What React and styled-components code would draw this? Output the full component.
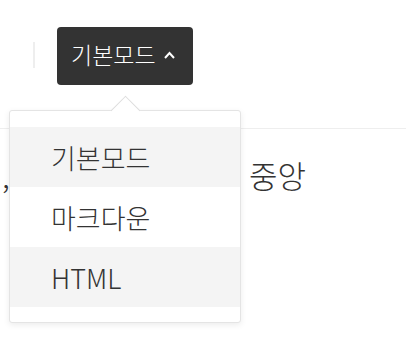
import styled, { createGlobalStyle } from "styled-components";

const GlobalStyle = createGlobalStyle`
  html, body {
    margin: 0;
    padding: 0;
    background: #fff;
  }
  body {
    font-family: "Noto Sans CJK KR", "Noto Sans", sans-serif;
    color: #333;
  }
`;

const Page = styled.div`
  width: 406px;
  height: 338px;
  overflow: hidden;
  position: relative;
`;

const Toolbar = styled.div`
  height: 129px;
  border-bottom: 1px solid #eeeeee;
  display: flex;
  align-items: flex-start;
  box-sizing: border-box;
  padding-left: 33px;
`;

const Divider = styled.div`
  width: 2px;
  height: 26px;
  background: #eeeeee;
  margin-top: 42px;
  margin-right: 22px;
`;

const ModeWrap = styled.div`
  position: relative;
  margin-top: 27px;
`;

const ModeButton = styled.button`
  display: flex;
  align-items: center;
  gap: 8px;
  height: 58px;
  width: 136px;
  padding: 0 0 4px 14px;
  box-sizing: border-box;
  border: none;
  border-radius: 4px;
  background: #333333;
  color: #fff;
  font-family: "Noto Sans CJK KR", sans-serif;
  font-size: 23px;
  font-weight: 300;
  cursor: pointer;

  svg {
    margin-top: 2px;
  }
`;

const Menu = styled.ul`
  position: absolute;
  left: -48px;
  top: 83px;
  width: 232px;
  margin: 0;
  padding: 16px 0 15px;
  list-style: none;
  background: #fff;
  border: 1px solid #e4e4e4;
  border-radius: 3px;
  box-shadow: 0 2px 6px rgba(0, 0, 0, 0.08);
  box-sizing: border-box;
  z-index: 2;

  &::before {
    content: "";
    position: absolute;
    top: -11px;
    left: 105px;
    width: 20px;
    height: 20px;
    background: #fff;
    border-top: 1px solid #dddddd;
    border-left: 1px solid #dddddd;
    transform: rotate(45deg);
  }
`;

const MenuItem = styled.li`
  position: relative;
  height: 60px;
  display: flex;
  align-items: center;
  padding-left: 41px;
  font-size: 27px;
  font-weight: 300;
  color: #333;
  background: ${({ $active }) => ($active ? "#f4f4f4" : "#fff")};
`;

const Content = styled.div`
  display: flex;
  align-items: baseline;
  padding-top: 26px;
  font-size: 31px;
  font-weight: 300;
  color: #333;
  line-height: 40px;
`;

const Comma = styled.span`
  margin-left: 2px;
`;

const Word = styled.span`
  margin-left: auto;
  margin-right: 100px;
`;

function Caret() {
  return (
    <svg width="11" height="8" viewBox="0 0 11 8">
      <path d="M1 7 L5.5 2 L10 7" fill="none" stroke="#fff" strokeWidth="2" />
    </svg>
  );
}

const items = [
  { label: "기본모드", active: true },
  { label: "마크다운", active: false },
  { label: "HTML", active: true },
];

export default function App() {
  return (
    <Page>
      <GlobalStyle />
      <Toolbar>
        <Divider />
        <ModeWrap>
          <ModeButton>
            기본모드
            <Caret />
          </ModeButton>
          <Menu>
            {items.map((item) => (
              <MenuItem key={item.label} $active={item.active}>
                {item.label}
              </MenuItem>
            ))}
          </Menu>
        </ModeWrap>
      </Toolbar>
      <Content>
        <Comma>,</Comma>
        <Word>중앙</Word>
      </Content>
    </Page>
  );
}
